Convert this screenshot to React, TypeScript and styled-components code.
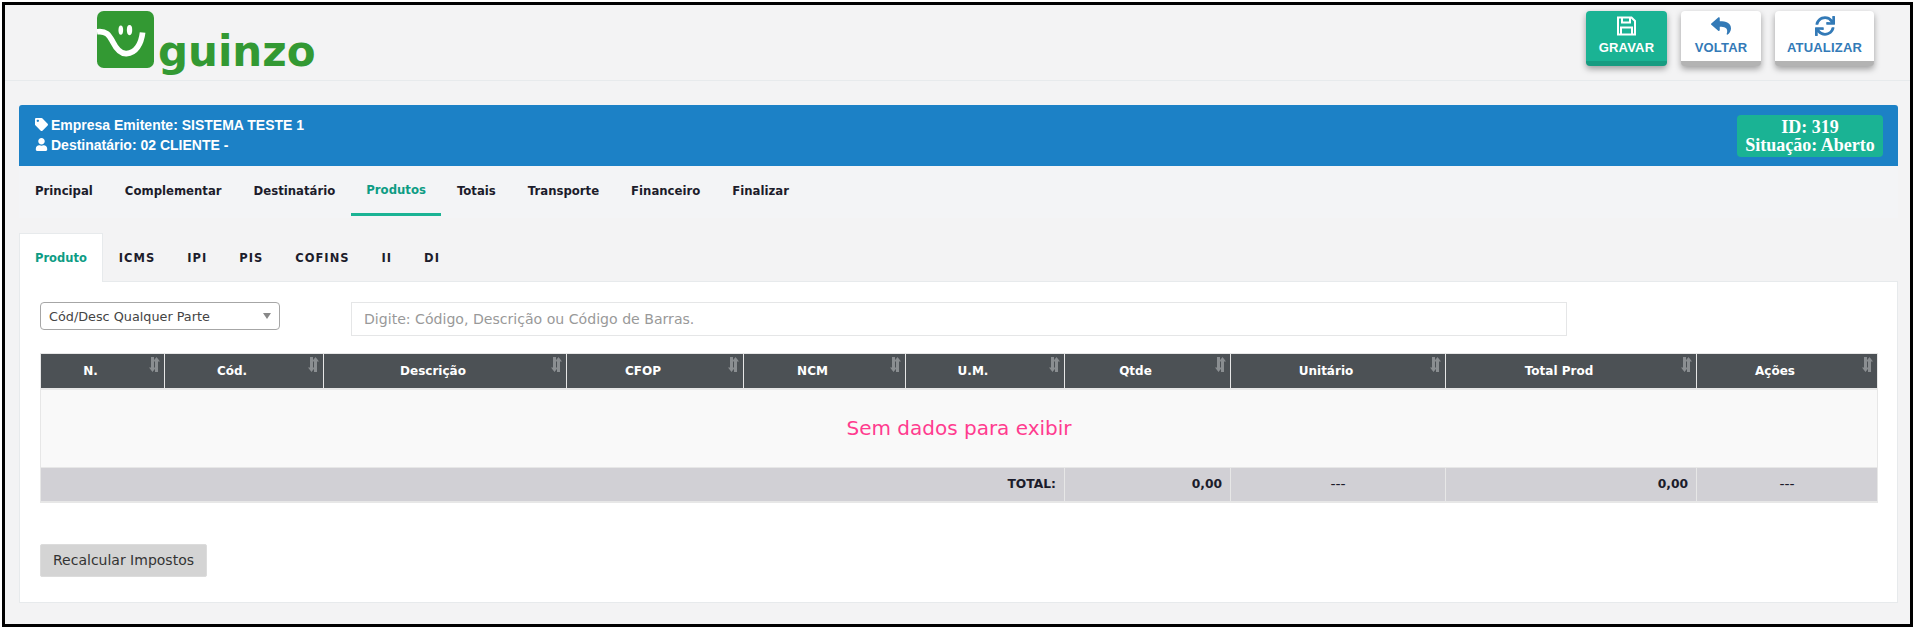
import styled, { createGlobalStyle } from "styled-components";
import { FaReply, FaSync, FaTag, FaUser } from "react-icons/fa";

const GlobalStyle = createGlobalStyle`
  html, body {
    margin: 0;
    background: #fff;
  }
  * {
    box-sizing: border-box;
  }
`;

const Frame = styled.div`
  width: 1911px;
  height: 625px;
  margin: 2px 0 0 2px;
  border: 3px solid #000;
  background: #f3f3f4;
  font-family: "DejaVu Sans", Verdana, sans-serif;
  overflow: hidden;
`;

const Header = styled.header`
  display: flex;
  justify-content: space-between;
  height: 76px;
  padding: 6px 36px 0 92px;
  border-bottom: 1px solid #e7eaec;
`;

const Brand = styled.div`
  display: flex;
  align-items: flex-start;
`;

const BrandName = styled.span`
  margin: 15px 0 0 4px;
  font-size: 42px;
  line-height: 52px;
  font-weight: 700;
  color: #339933;
`;

const Actions = styled.div`
  display: flex;
  gap: 14px;
  align-items: flex-start;
`;

const ActionButton = styled.button<{ $primary?: boolean; $width: number }>`
  display: flex;
  flex-direction: column;
  align-items: center;
  width: ${(p) => p.$width}px;
  height: 55px;
  padding: 5px 0 0;
  border: 0;
  border-radius: 4px;
  border-bottom: 5px solid ${(p) => (p.$primary ? "#179c81" : "#b3b3b3")};
  background: ${(p) => (p.$primary ? "#1ab394" : "#fff")};
  color: ${(p) => (p.$primary ? "#fff" : "#337ab7")};
  box-shadow: 0 3px 6px rgba(0, 0, 0, 0.35);
  font-family: "Liberation Sans", Arial, sans-serif;
  font-size: 13px;
  font-weight: 700;
  letter-spacing: 0.2px;
  line-height: 16px;

  svg {
    font-size: 20px;
    margin-bottom: 4px;
  }
`;

const Content = styled.main`
  padding: 24px 12px 0 14px;
`;

const InfoBar = styled.section`
  display: flex;
  justify-content: space-between;
  height: 61px;
  padding: 10px 15px 10px 16px;
  border-radius: 3px 3px 0 0;
  background: #1c81c6;
  color: #fff;
`;

const InfoLines = styled.div`
  font-family: "Liberation Sans", Arial, sans-serif;
  font-size: 14px;
  font-weight: 700;
  line-height: 20px;
  svg {
    font-size: 13px;
    margin-right: 3px;
    vertical-align: -1px;
  }
`;

const StatusBadge = styled.div`
  width: 146px;
  height: 42px;
  padding-top: 3px;
  border-radius: 4px;
  background: #1ab394;
  font-family: "Liberation Serif", "Times New Roman", serif;
  font-size: 18px;
  font-weight: 700;
  line-height: 18px;
  text-align: center;
`;

const MainNav = styled.nav`
  display: flex;
  height: 52px;
  background: #f3f4f6;
`;

const NavLink = styled.a<{ $active?: boolean }>`
  height: 50px;
  padding: ${(p) => (p.$active ? "16px 15px" : "17px 16px")} 0;
  border-bottom: ${(p) => (p.$active ? "3px solid #1ab394" : "0")};
  color: ${(p) => (p.$active ? "#0e9c84" : "#1c1c2b")};
  font-size: 11.7px;
  font-weight: 700;
  line-height: 16px;
`;

const SubNav = styled.nav`
  display: flex;
  height: 48px;
  margin-top: 15px;
`;

const SubLink = styled.a<{ $active?: boolean }>`
  position: relative;
  height: ${(p) => (p.$active ? "49px" : "48px")};
  padding: 16px 15px 0;
  background: ${(p) => (p.$active ? "#fff" : "transparent")};
  border: ${(p) => (p.$active ? "1px solid #e7eaec" : "1px solid transparent")};
  border-bottom: 0;
  color: ${(p) => (p.$active ? "#0e9c84" : "#1c1c2b")};
  font-size: 11.5px;
  font-weight: 700;
  letter-spacing: ${(p) => (p.$active ? "0" : "1px")};
  line-height: 16px;
`;

const Panel = styled.section`
  height: 322px;
  padding: 20px;
  border: 1px solid #e7eaec;
  background: #fff;
`;

const SearchRow = styled.div`
  display: flex;
  align-items: flex-start;
  gap: 71px;
  margin-bottom: 17px;
`;

const SelectBox = styled.div`
  display: flex;
  align-items: center;
  justify-content: space-between;
  width: 240px;
  height: 28px;
  padding: 0 8px 0 8px;
  border: 1px solid #a6a6a6;
  border-radius: 4px;
  color: #444;
  font-size: 12.8px;

  &::after {
    content: "";
    border-left: 4px solid transparent;
    border-right: 4px solid transparent;
    border-top: 6px solid #888;
  }
`;

const SearchInput = styled.input`
  width: 1216px;
  height: 34px;
  padding: 0 12px;
  border: 1px solid #e5e6e7;
  font-family: "DejaVu Sans", Verdana, sans-serif;
  font-size: 14.1px;

  &::placeholder {
    color: #999;
    opacity: 1;
  }
`;

const Table = styled.table`
  width: 1837px;
  border-collapse: collapse;
  table-layout: fixed;
  font-size: 12px;
`;

const HeadCell = styled.th`
  position: relative;
  height: 35px;
  padding: 0 24px 0 0;
  background: #4c5155;
  border: 1px solid #e7e7e7;
  border-width: 1px 1px 2px 1px;
  color: #fff;
  font-size: 12px;
  font-weight: 700;
  text-align: center;
`;

const SortMark = styled.svg`
  position: absolute;
  top: 3px;
  right: 4px;
  width: 11px;
  height: 15px;
  fill: #8a8e91;
`;

const EmptyCell = styled.td`
  height: 79px;
  padding: 0;
  background: #f9f9f9;
  border: 1px solid #e7e7e7;
  color: #ff3c8f;
  font-size: 20px;
  text-align: center;
`;

const TotalCell = styled.td<{ $align: string; $bold?: boolean }>`
  height: 34px;
  padding: 0 8px;
  background: #d1d0d5;
  border: 1px solid #e7e7e7;
  border-bottom-width: 2px;
  color: #1c1c2b;
  font-size: ${(p) => (p.$bold ? "12.3px" : "14px")};
  font-weight: ${(p) => (p.$bold ? 700 : 400)};
  text-align: ${(p) => p.$align};
`;

const RecalcButton = styled.button`
  display: block;
  width: 167px;
  height: 33px;
  margin-top: 41px;
  padding: 0;
  border: 1px solid #dcdcdc;
  border-radius: 2px;
  background: #d4d4d4;
  color: #333;
  font-family: "DejaVu Sans", Verdana, sans-serif;
  font-size: 14px;
`;

const columns = [
  { title: "N.", width: 124 },
  { title: "Cód.", width: 159 },
  { title: "Descrição", width: 243 },
  { title: "CFOP", width: 177 },
  { title: "NCM", width: 162 },
  { title: "U.M.", width: 159 },
  { title: "Qtde", width: 166 },
  { title: "Unitário", width: 215 },
  { title: "Total Prod", width: 251 },
  { title: "Ações", width: 181 },
];

const mainTabs = ["Principal", "Complementar", "Destinatário", "Produtos", "Totais", "Transporte", "Financeiro", "Finalizar"];
const subTabs = ["Produto", "ICMS", "IPI", "PIS", "COFINS", "II", "DI"];

function LogoMark() {
  return (
    <svg width="57" height="57" viewBox="0 0 170 170">
      <rect width="170" height="170" rx="20" fill="#339933" />
      <path
        d="M0 62 C28 58 36 72 46 90 C60 118 72 128 88 127 C116 125 132 98 136 64"
        fill="none"
        stroke="#fff"
        strokeWidth="17"
      />
      <ellipse cx="71" cy="57" rx="7" ry="14" fill="#fff" />
      <ellipse cx="97" cy="57" rx="8" ry="15" fill="#fff" />
    </svg>
  );
}

function SaveIcon() {
  return (
    <svg width="19" height="20" viewBox="0 0 19 19" fill="none" stroke="currentColor" strokeWidth="2">
      <path d="M1 1h13.5L18 4.5V18H1z" />
      <path d="M5 1v5h8V1" />
      <path d="M4 18v-7h11v7" />
    </svg>
  );
}

function SortIcon() {
  return (
    <SortMark viewBox="0 0 11 15">
      <path d="M2 0h3v10.5h2L3.5 15 0 10.5h2z" />
      <path d="M6 15h3V4.5h2L7.5 0 4 4.5h2z" />
    </SortMark>
  );
}

export default function App() {
  return (
    <Frame>
      <GlobalStyle />
      <Header>
        <Brand>
          <LogoMark />
          <BrandName>guinzo</BrandName>
        </Brand>
        <Actions>
          <ActionButton $primary $width={81}>
            <SaveIcon />
            GRAVAR
          </ActionButton>
          <ActionButton $width={80}>
            <FaReply />
            VOLTAR
          </ActionButton>
          <ActionButton $width={99}>
            <FaSync />
            ATUALIZAR
          </ActionButton>
        </Actions>
      </Header>
      <Content>
        <InfoBar>
          <InfoLines>
            <div>
              <FaTag />
              Empresa Emitente: SISTEMA TESTE 1
            </div>
            <div>
              <FaUser />
              Destinatário: 02 CLIENTE -
            </div>
          </InfoLines>
          <StatusBadge>
            ID: 319
            <br />
            Situação: Aberto
          </StatusBadge>
        </InfoBar>
        <MainNav>
          {mainTabs.map((tab) => (
            <NavLink key={tab} $active={tab === "Produtos"}>
              {tab}
            </NavLink>
          ))}
        </MainNav>
        <SubNav>
          {subTabs.map((tab) => (
            <SubLink key={tab} $active={tab === "Produto"}>
              {tab}
            </SubLink>
          ))}
        </SubNav>
        <Panel>
          <SearchRow>
            <SelectBox>Cód/Desc Qualquer Parte</SelectBox>
            <SearchInput placeholder="Digite: Código, Descrição ou Código de Barras." />
          </SearchRow>
          <Table>
            <colgroup>
              {columns.map((col) => (
                <col key={col.title} width={col.width} />
              ))}
            </colgroup>
            <thead>
              <tr>
                {columns.map((col) => (
                  <HeadCell key={col.title}>
                    {col.title}
                    <SortIcon />
                  </HeadCell>
                ))}
              </tr>
            </thead>
            <tbody>
              <tr>
                <EmptyCell colSpan={10}>Sem dados para exibir</EmptyCell>
              </tr>
              <tr>
                <TotalCell colSpan={6} $align="right" $bold>
                  TOTAL:
                </TotalCell>
                <TotalCell $align="right" $bold>
                  0,00
                </TotalCell>
                <TotalCell $align="center">---</TotalCell>
                <TotalCell $align="right" $bold>
                  0,00
                </TotalCell>
                <TotalCell $align="center">---</TotalCell>
              </tr>
            </tbody>
          </Table>
          <RecalcButton>Recalcular Impostos</RecalcButton>
        </Panel>
      </Content>
    </Frame>
  );
}
